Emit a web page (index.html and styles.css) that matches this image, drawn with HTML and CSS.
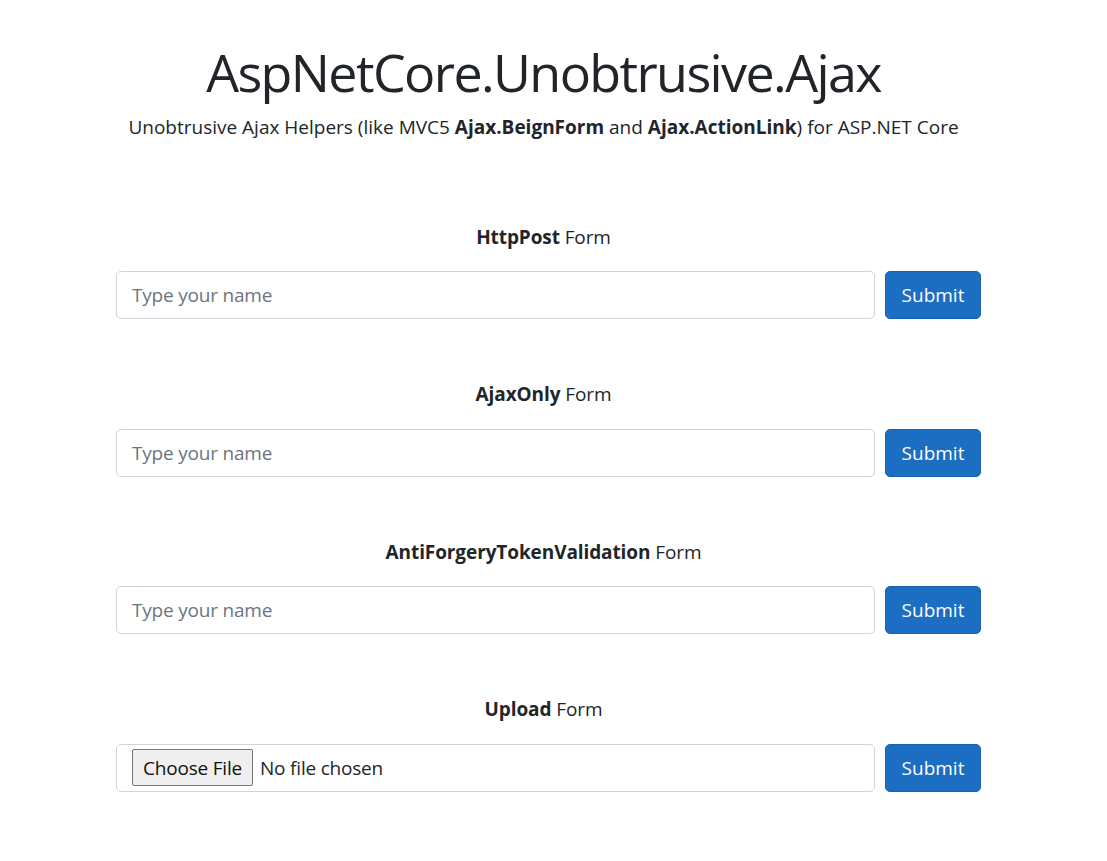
FILE: index.html
```html
<!DOCTYPE html>
<html lang="en">
<head>
<meta charset="utf-8">
<title>AspNetCore.Unobtrusive.Ajax</title>
<link rel="stylesheet" href="styles.css">
</head>
<body>
<main class="page">
  <header class="hero">
    <h1 class="hero-title">AspNetCore.Unobtrusive.Ajax</h1>
    <p class="hero-lead">Unobtrusive Ajax Helpers (like MVC5 <b>Ajax.BeignForm</b> and <b>Ajax.ActionLink</b>) for ASP.NET Core</p>
  </header>

  <section class="demo">
    <h5 class="demo-title"><b>HttpPost</b> Form</h5>
    <form class="demo-form">
      <input class="field" type="text" placeholder="Type your name">
      <button class="btn" type="button">Submit</button>
    </form>
  </section>

  <section class="demo">
    <h5 class="demo-title"><b>AjaxOnly</b> Form</h5>
    <form class="demo-form">
      <input class="field" type="text" placeholder="Type your name">
      <button class="btn" type="button">Submit</button>
    </form>
  </section>

  <section class="demo">
    <h5 class="demo-title"><b>AntiForgeryTokenValidation</b> Form</h5>
    <form class="demo-form">
      <input class="field" type="text" placeholder="Type your name">
      <button class="btn" type="button">Submit</button>
    </form>
  </section>

  <section class="demo">
    <h5 class="demo-title"><b>Upload</b> Form</h5>
    <form class="demo-form">
      <div class="field field-file"><input class="file" type="file"></div>
      <button class="btn" type="button">Submit</button>
    </form>
  </section>
</main>
</body>
</html>
```
FILE: styles.css
```css
html, body {
  margin: 0;
  padding: 0;
  background: #ffffff;
}
body {
  font-family: "Open Sans", "Noto Sans", "Liberation Sans", sans-serif;
  color: #212529;
}
.page {
  width: 875px;
  margin-left: 106px;
  padding-top: 41px;
}
.hero {
  text-align: center;
}
.hero-title {
  margin: 0;
  font-size: 52px;
  font-weight: 400;
  letter-spacing: -1.6px;
  line-height: 1.2;
}
.hero-lead {
  margin: 10px 0 0;
  font-size: 19px;
  line-height: 1.5;
}
.hero-lead b {
  font-weight: 700;
}
.demo {
  margin-top: 81px;
}
.demo + .demo {
  margin-top: 61px;
}
.demo-title {
  margin: 0;
  text-align: center;
  font-size: 19px;
  font-weight: 400;
  letter-spacing: -0.1px;
  line-height: 1.5;
}
.demo-title b {
  font-weight: 700;
}
.demo-form {
  display: flex;
  gap: 10px;
  padding-left: 10px;
  margin: 20px 0 0;
}
.field {
  flex: 1;
  box-sizing: border-box;
  height: 48px;
  padding: 8px 15px;
  border: 1px solid #ced4da;
  border-radius: 5px;
  font-family: inherit;
  font-size: 19px;
  letter-spacing: -0.2px;
  color: #495057;
  background: #fff;
  outline: none;
}
.field::placeholder {
  color: #6c757d;
}
.field-file {
  display: flex;
  align-items: center;
  padding: 0 15px;
}
.file {
  font-family: inherit;
  font-size: 19px;
  letter-spacing: -0.2px;
  color: #212529;
}
.file::file-selector-button {
  font-family: inherit;
  font-size: 19px;
  letter-spacing: -0.2px;
  color: #111;
  background: #efefef;
  border: 1px solid #767676;
  border-radius: 2px;
  height: 37px;
  padding: 0 10px;
  margin-right: 7px;
}
.btn {
  box-sizing: border-box;
  width: 96px;
  height: 48px;
  border: 1px solid #1861ac;
  border-radius: 5px;
  background: #1b6ec2;
  color: #fff;
  font-family: inherit;
  font-size: 19px;
  line-height: 1.5;
  padding: 0;
  cursor: pointer;
}
```
